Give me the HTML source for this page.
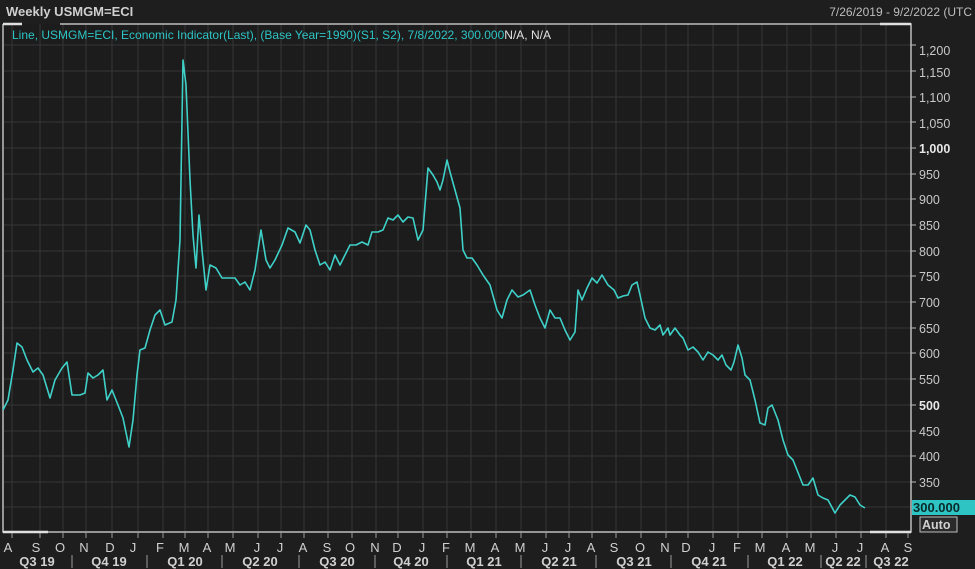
<!DOCTYPE html>
<html><head><meta charset="utf-8"><style>
body{margin:0;background:#1e1e1e;width:975px;height:569px;overflow:hidden;font-family:"Liberation Sans",sans-serif;}
svg{position:absolute;left:0;top:0}
</style></head><body>
<svg width="975" height="569" xmlns="http://www.w3.org/2000/svg" font-family="Liberation Sans, sans-serif">
<rect width="975" height="569" fill="#1e1e1e"/>
<text x="6" y="16" font-size="13" font-weight="bold" fill="#cfcfcf">Weekly USMGM=ECI</text>
<text x="972" y="16" font-size="12" fill="#bdbdbd" text-anchor="end">7/26/2019 - 9/2/2022 (UTC</text>
<rect x="3" y="24" width="908" height="508" fill="#1c1c1c"/>
<g stroke="#363636" stroke-width="1">
<path id="vg" d="M12 24V532M40 24V532M63 24V532M86 24V532M112 24V532M138 24V532M163 24V532M185 24V532M208 24V532M233 24V532M258 24V532M281 24V532M304 24V532M328 24V532M352 24V532M376 24V532M398 24V532M423 24V532M447 24V532M471 24V532M496 24V532M521 24V532M546 24V532M569 24V532M592 24V532M616 24V532M641 24V532M666 24V532M688 24V532M713 24V532M738 24V532M762 24V532M787 24V532M811 24V532M836 24V532M861 24V532M886 24V532"/>
<path d="M3 45H911M3 71H911M3 97H911M3 122H911M3 148H911M3 174H911M3 199H911M3 225H911M3 251H911M3 276H911M3 302H911M3 328H911M3 353H911M3 379H911M3 405H911M3 431H911M3 456H911M3 482H911M3 507H911"/>
</g>
<path d="M3 24V532H911V24H60" fill="none" stroke="#bdbdbd" stroke-width="1.5"/>
<path d="M3 24H22M3 532H48M870 532H911M880 24H911" stroke="#e0e0e0" stroke-width="2.5"/>
<text x="12" y="39" font-size="12" fill="#2ec4c4">Line, USMGM=ECI, Economic Indicator(Last), (Base Year=1990)(S1, S2), 7/8/2022, 300.000<tspan fill="#e0e0e0">N/A, N/A</tspan></text>
<polyline fill="none" stroke="#3fd0c8" stroke-width="1.6" stroke-linejoin="round" points="3,410 8,400 13,370 17,343 22,347 27,360 33,372 38,368 43,375 50,398 55,380 62,368 67,362 72,395 80,395 85,393 88,373 93,378 98,375 103,370 107,400 112,390 118,405 123,418 129,447 133,420 137,375 140,350 145,348 150,330 155,315 160,310 165,325 172,322 176,300 180,240 183,60 186,85 190,180 193,235 196,268 199,215 202,250 206,290 210,265 216,268 222,278 228,278 235,278 240,285 245,282 250,290 255,270 261,230 266,260 270,268 275,260 282,245 288,228 295,232 300,243 306,225 310,230 315,250 320,265 325,262 330,270 335,255 340,265 345,255 350,245 356,245 362,242 368,245 372,232 378,232 383,230 388,218 393,220 398,215 403,222 408,217 413,218 418,240 423,230 428,168 433,175 437,182 440,190 443,180 447,160 450,172 455,190 460,208 463,250 467,258 472,258 477,265 483,275 490,285 497,310 502,318 507,300 512,290 518,297 523,295 530,290 535,305 540,318 545,328 550,310 555,318 560,318 565,330 570,340 575,332 578,290 582,300 587,288 592,278 597,283 602,275 608,285 614,290 618,298 623,296 628,295 632,285 637,282 640,295 645,318 650,328 655,330 660,325 663,335 668,328 670,335 675,328 680,335 683,338 688,350 693,347 698,352 703,360 708,352 713,355 718,360 722,355 726,365 731,370 734,362 738,345 742,358 745,375 750,380 755,400 760,423 765,425 768,408 772,405 778,420 783,440 788,455 793,460 797,470 803,485 808,485 813,478 818,495 823,498 828,500 835,513 840,505 845,500 850,495 855,497 860,505 865,508"/>
<g stroke="#bdbdbd" stroke-width="1">
<path d="M911 45h5M911 71h5M911 97h5M911 122h5M911 148h5M911 174h5M911 199h5M911 225h5M911 251h5M911 276h5M911 302h5M911 328h5M911 353h5M911 379h5M911 405h5M911 431h5M911 456h5M911 482h5"/>
</g>
<g font-size="12.5" fill="#c8c8c8">
<text x="919" y="55">1,200</text><text x="919" y="77">1,150</text><text x="919" y="102">1,100</text><text x="919" y="128">1,050</text><text x="919" y="153" font-weight="bold" fill="#e6e6e6">1,000</text><text x="919" y="179">950</text><text x="919" y="204">900</text><text x="919" y="230">850</text><text x="919" y="256">800</text><text x="919" y="281">750</text><text x="919" y="307">700</text><text x="919" y="333">650</text><text x="919" y="358">600</text><text x="919" y="384">550</text><text x="919" y="410" font-weight="bold" fill="#e6e6e6">500</text><text x="919" y="436">450</text><text x="919" y="461">400</text><text x="919" y="487">350</text>
</g>
<rect x="912" y="500" width="63" height="15" fill="#2ec4c4"/>
<text x="913" y="512" font-size="13" font-weight="bold" fill="#0a2a2a">300.000</text>
<rect x="920" y="517" width="37" height="15" fill="#2a2a2a" stroke="#bdbdbd"/>
<text x="922" y="529" font-size="12.5" font-weight="bold" fill="#d0d0d0">Auto</text>
<g stroke="#9a9a9a"><path d="M12 533v5M40 533v5M63 533v5M86 533v5M112 533v5M138 533v5M163 533v5M185 533v5M208 533v5M233 533v5M258 533v5M281 533v5M304 533v5M328 533v5M352 533v5M376 533v5M398 533v5M423 533v5M447 533v5M471 533v5M496 533v5M521 533v5M546 533v5M569 533v5M592 533v5M616 533v5M641 533v5M666 533v5M688 533v5M713 533v5M738 533v5M762 533v5M787 533v5M811 533v5M836 533v5M861 533v5M886 533v5M908 533v5"/>
<path d="M72 555v13M147 555v13M222 555v13M299 555v13M375 555v13M447 555v13M521 555v13M596 555v13M671 555v13M748 555v13M821 555v13M866 555v13"/></g>
<g font-size="13" fill="#d0d0d0" text-anchor="middle">
<text x="8" y="552">A</text><text x="36" y="552">S</text><text x="60" y="552">O</text><text x="84" y="552">N</text><text x="110" y="552">D</text><text x="133" y="552">J</text><text x="160" y="552">F</text><text x="184" y="552">M</text><text x="207" y="552">A</text><text x="230" y="552">M</text><text x="257" y="552">J</text><text x="280" y="552">J</text><text x="303" y="552">A</text><text x="327" y="552">S</text><text x="350" y="552">O</text><text x="375" y="552">N</text><text x="397" y="552">D</text><text x="422" y="552">J</text><text x="446" y="552">F</text><text x="470" y="552">M</text><text x="495" y="552">A</text><text x="520" y="552">M</text><text x="545" y="552">J</text><text x="568" y="552">J</text><text x="591" y="552">A</text><text x="614" y="552">S</text><text x="640" y="552">O</text><text x="665" y="552">N</text><text x="686" y="552">D</text><text x="712" y="552">J</text><text x="737" y="552">F</text><text x="760" y="552">M</text><text x="786" y="552">A</text><text x="810" y="552">M</text><text x="835" y="552">J</text><text x="860" y="552">J</text><text x="885" y="552">A</text><text x="908" y="552">S</text>
</g>
<g font-size="13" font-weight="bold" fill="#d0d0d0" text-anchor="middle">
<text x="37" y="566">Q3 19</text><text x="109" y="566">Q4 19</text><text x="185" y="566">Q1 20</text><text x="260" y="566">Q2 20</text><text x="337" y="566">Q3 20</text><text x="411" y="566">Q4 20</text><text x="484" y="566">Q1 21</text><text x="559" y="566">Q2 21</text><text x="634" y="566">Q3 21</text><text x="709" y="566">Q4 21</text><text x="785" y="566">Q1 22</text><text x="843" y="566">Q2 22</text><text x="891" y="566">Q3 22</text>
</g>
</svg>
</body></html>
